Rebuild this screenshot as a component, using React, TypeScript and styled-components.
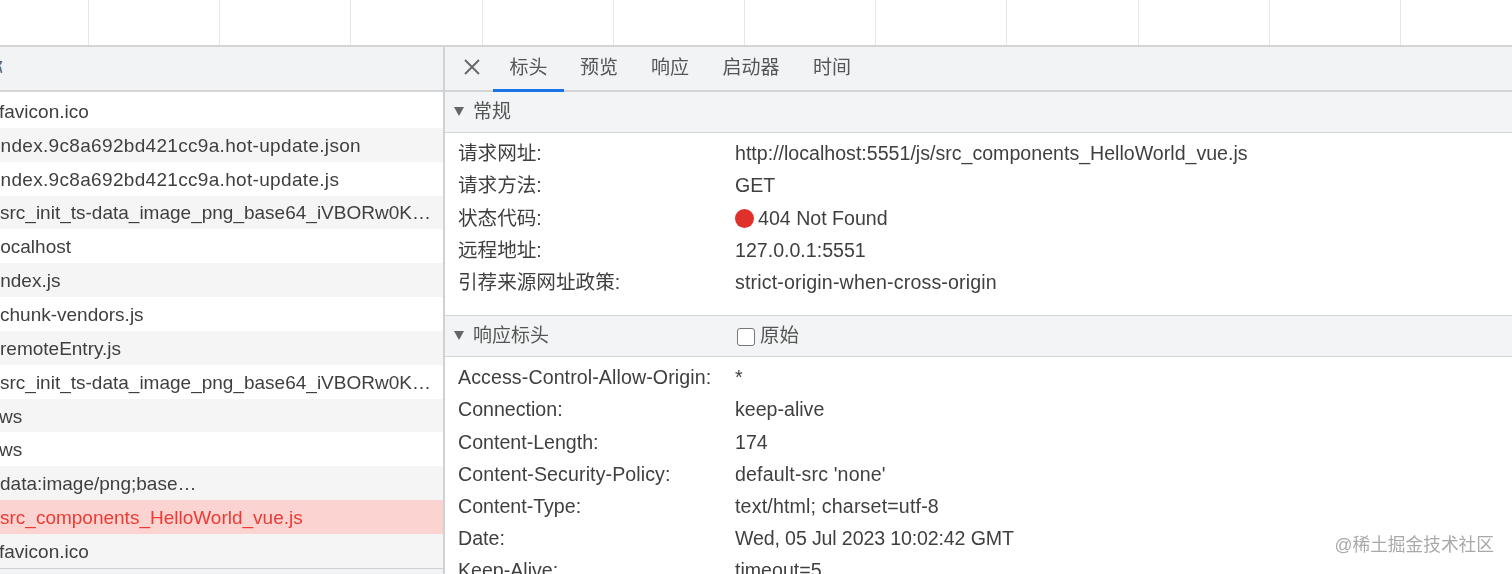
import React from "react";
import styled, { createGlobalStyle } from "styled-components";

const GlobalStyle = createGlobalStyle`
  html, body {
    margin: 0;
    padding: 0;
    background: #fff;
    overflow: hidden;
  }
`;

const Page = styled.div`
  width: 1512px;
  height: 574px;
  overflow: hidden;
  position: relative;
  display: flex;
  flex-direction: column;
  font-family: "Liberation Sans", "Noto Sans CJK SC", sans-serif;
  font-size: 19.6px;
  line-height: 1;
  color: #3f3f3f;
  filter: blur(0.5px);
`;

const Timeline = styled.div`
  height: 45px;
  flex: none;
  display: flex;
  padding-left: 88px;
  border-bottom: 2px solid #d4d5d6;
`;

const Tick = styled.div`
  width: 131.2px;
  flex: none;
  box-sizing: border-box;
  border-left: 1px solid #e6e6e6;
`;

const Panels = styled.div`
  flex: 1;
  min-height: 0;
  display: flex;
`;

const Requests = styled.div`
  width: 443px;
  flex: none;
  overflow: hidden;
  display: flex;
  flex-direction: column;
`;

const RequestsHeader = styled.div`
  height: 43px;
  flex: none;
  background: #f1f3f4;
  border-bottom: 2px solid #d4d5d6;
  display: flex;
  align-items: center;
  overflow: hidden;
`;

const HeaderLabel = styled.span`
  margin-left: -16px;
  padding-bottom: 1px;
  color: #555;
  font-size: 19px;
`;

const RequestRows = styled.div`
  padding-top: 2px;
  display: flex;
  flex-direction: column;
`;

const RequestRow = styled.div<{ $shade?: boolean; $failed?: boolean }>`
  height: 33.85px;
  flex: none;
  box-sizing: border-box;
  padding-top: 1px;
  display: flex;
  align-items: center;
  overflow: hidden;
  white-space: nowrap;
  font-size: 19px;
  background: ${(p) => (p.$failed ? "#fbd3d1" : p.$shade ? "#f5f5f5" : "#fff")};
  color: ${(p) => (p.$failed ? "#ec3b33" : "#3f3f3f")};
`;

const RequestName = styled.span<{ $indent: number; $tracking?: number }>`
  margin-left: ${(p) => p.$indent}px;
  letter-spacing: ${(p) => p.$tracking ?? 0}px;
`;

const RequestsFooter = styled.div`
  flex: 1;
  background: #f1f3f4;
  border-top: 1px solid #cfd0d1;
`;

const Divider = styled.div`
  width: 2px;
  flex: none;
  background: #d0d1d2;
`;

const Details = styled.div`
  flex: 1;
  min-width: 0;
  display: flex;
  flex-direction: column;
  overflow: hidden;
`;

const TabBar = styled.div`
  height: 43px;
  flex: none;
  background: #f1f3f4;
  border-bottom: 2px solid #d4d5d6;
  display: flex;
  align-items: stretch;
  padding-left: 18px;
`;

const CloseIcon = styled.svg`
  width: 18px;
  height: 18px;
  flex: none;
  align-self: center;
  margin: 0 12px 4px 0;
`;

const Tab = styled.div<{ $active?: boolean; $width: number }>`
  width: ${(p) => p.$width}px;
  flex: none;
  box-sizing: border-box;
  display: flex;
  align-items: center;
  justify-content: center;
  font-size: 19px;
  color: #555;
  margin-bottom: -2px;
  padding-bottom: 2px;
  border-bottom: 3px solid ${(p) => (p.$active ? "#1a73e8" : "transparent")};
`;

const SectionHeader = styled.div`
  height: 41px;
  flex: none;
  box-sizing: border-box;
  background: #f3f4f5;
  border-bottom: 1px solid #d4d5d6;
  display: flex;
  align-items: center;
  padding: 0 0 1px 9px;
  font-size: 19px;
  color: #555;
`;

const SectionHeaderWithTop = styled(SectionHeader)`
  height: 42px;
  border-top: 1px solid #d4d5d6;
`;

const Caret = styled.span`
  width: 0;
  height: 0;
  flex: none;
  border-left: 5px solid transparent;
  border-right: 5px solid transparent;
  border-top: 9px solid #666;
  margin: 0 9px 0 0;
`;

const SectionTitle = styled.span`
  width: 263px;
  flex: none;
`;

const RawToggle = styled.label`
  display: flex;
  align-items: center;
  gap: 5px;
  font-size: 19.5px;
`;

const RawBox = styled.span`
  width: 18px;
  height: 18px;
  box-sizing: border-box;
  border: 1.5px solid #777;
  border-radius: 3px;
  background: #fff;
  margin: 3px 0 0 1px;
`;

const Fields = styled.div<{ $bottom: number }>`
  padding: 5px 0 ${(p) => p.$bottom}px 13px;
  display: flex;
  flex-direction: column;
`;

const Field = styled.div`
  height: 32.2px;
  flex: none;
  display: flex;
  align-items: center;
  white-space: nowrap;
`;

const FieldKey = styled.span<{ $tracking?: number }>`
  width: 277px;
  flex: none;
  letter-spacing: ${(p) => p.$tracking ?? 0}px;
`;

const FieldValue = styled.span<{ $tracking?: number }>`
  display: flex;
  align-items: center;
  gap: 4px;
  letter-spacing: ${(p) => p.$tracking ?? 0}px;
`;

const StatusDot = styled.span`
  width: 19px;
  height: 19px;
  flex: none;
  border-radius: 50%;
  background: #e0302a;
`;

const Watermark = styled.div`
  position: absolute;
  right: 18px;
  bottom: 19px;
  font-size: 17.7px;
  color: #a9a9a9;
  background: rgba(255, 255, 255, 0.75);
`;

const ticks = Array.from({ length: 11 }, (_, i) => i);

const requests = [
  { name: "favicon.ico", indent: -1 },
  { name: "index.9c8a692bd421cc9a.hot-update.json", indent: -4, tracking: 0.32 },
  { name: "index.9c8a692bd421cc9a.hot-update.js", indent: -4, tracking: 0.32 },
  { name: "src_init_ts-data_image_png_base64_iVBORw0K…", indent: 0 },
  { name: "localhost", indent: -4 },
  { name: "index.js", indent: -4 },
  { name: "chunk-vendors.js", indent: 0 },
  { name: "remoteEntry.js", indent: 0 },
  { name: "src_init_ts-data_image_png_base64_iVBORw0K…", indent: 0 },
  { name: "ws", indent: -1 },
  { name: "ws", indent: -1 },
  { name: "data:image/png;base…", indent: 0 },
  { name: "src_components_HelloWorld_vue.js", indent: 0, failed: true },
  { name: "favicon.ico", indent: -1 },
];

const generalFields = [
  { key: "请求网址:", value: "http://localhost:5551/js/src_components_HelloWorld_vue.js" },
  { key: "请求方法:", value: "GET" },
  { key: "状态代码:", value: "404 Not Found" },
  { key: "远程地址:", value: "127.0.0.1:5551" },
  { key: "引荐来源网址政策:", value: "strict-origin-when-cross-origin", tracking: 0.16 },
];

const responseFields = [
  { key: "Access-Control-Allow-Origin:", value: "*", keyTracking: 0.1 },
  { key: "Connection:", value: "keep-alive" },
  { key: "Content-Length:", value: "174" },
  { key: "Content-Security-Policy:", value: "default-src 'none'", keyTracking: 0.1, tracking: 0.15 },
  { key: "Content-Type:", value: "text/html; charset=utf-8", tracking: 0.17 },
  { key: "Date:", value: "Wed, 05 Jul 2023 10:02:42 GMT", tracking: -0.14 },
  { key: "Keep-Alive:", value: "timeout=5" },
];

const tabs = [
  { label: "标头", width: 71, active: true },
  { label: "预览", width: 70 },
  { label: "响应", width: 72 },
  { label: "启动器", width: 90 },
  { label: "时间", width: 72 },
];

export default function App() {
  return (
    <>
      <GlobalStyle />
      <Page>
        <Timeline>
          {ticks.map((t) => (
            <Tick key={t} />
          ))}
        </Timeline>
        <Panels>
          <Requests>
            <RequestsHeader>
              <HeaderLabel>称</HeaderLabel>
            </RequestsHeader>
            <RequestRows>
              {requests.map((r, i) => (
                <RequestRow key={i} $shade={i % 2 === 1} $failed={r.failed}>
                  <RequestName $indent={r.indent} $tracking={r.tracking}>
                    {r.name}
                  </RequestName>
                </RequestRow>
              ))}
            </RequestRows>
            <RequestsFooter />
          </Requests>
          <Divider />
          <Details>
            <TabBar>
              <CloseIcon viewBox="0 0 18 18">
                <path d="M2 2 L16 16 M16 2 L2 16" stroke="#666" strokeWidth="1.8" fill="none" />
              </CloseIcon>
              {tabs.map((t) => (
                <Tab key={t.label} $width={t.width} $active={t.active}>
                  {t.label}
                </Tab>
              ))}
            </TabBar>
            <SectionHeader>
              <Caret />
              <SectionTitle>常规</SectionTitle>
            </SectionHeader>
            <Fields $bottom={16}>
              {generalFields.map((f) => (
                <Field key={f.key}>
                  <FieldKey>{f.key}</FieldKey>
                  <FieldValue $tracking={f.tracking}>
                    {f.value.startsWith("404") && <StatusDot />}
                    {f.value}
                  </FieldValue>
                </Field>
              ))}
            </Fields>
            <SectionHeaderWithTop>
              <Caret />
              <SectionTitle>响应标头</SectionTitle>
              <RawToggle>
                <RawBox />
                原始
              </RawToggle>
            </SectionHeaderWithTop>
            <Fields $bottom={0}>
              {responseFields.map((f) => (
                <Field key={f.key}>
                  <FieldKey $tracking={f.keyTracking}>{f.key}</FieldKey>
                  <FieldValue $tracking={f.tracking}>{f.value}</FieldValue>
                </Field>
              ))}
            </Fields>
          </Details>
        </Panels>
        <Watermark>@稀土掘金技术社区</Watermark>
      </Page>
    </>
  );
}
